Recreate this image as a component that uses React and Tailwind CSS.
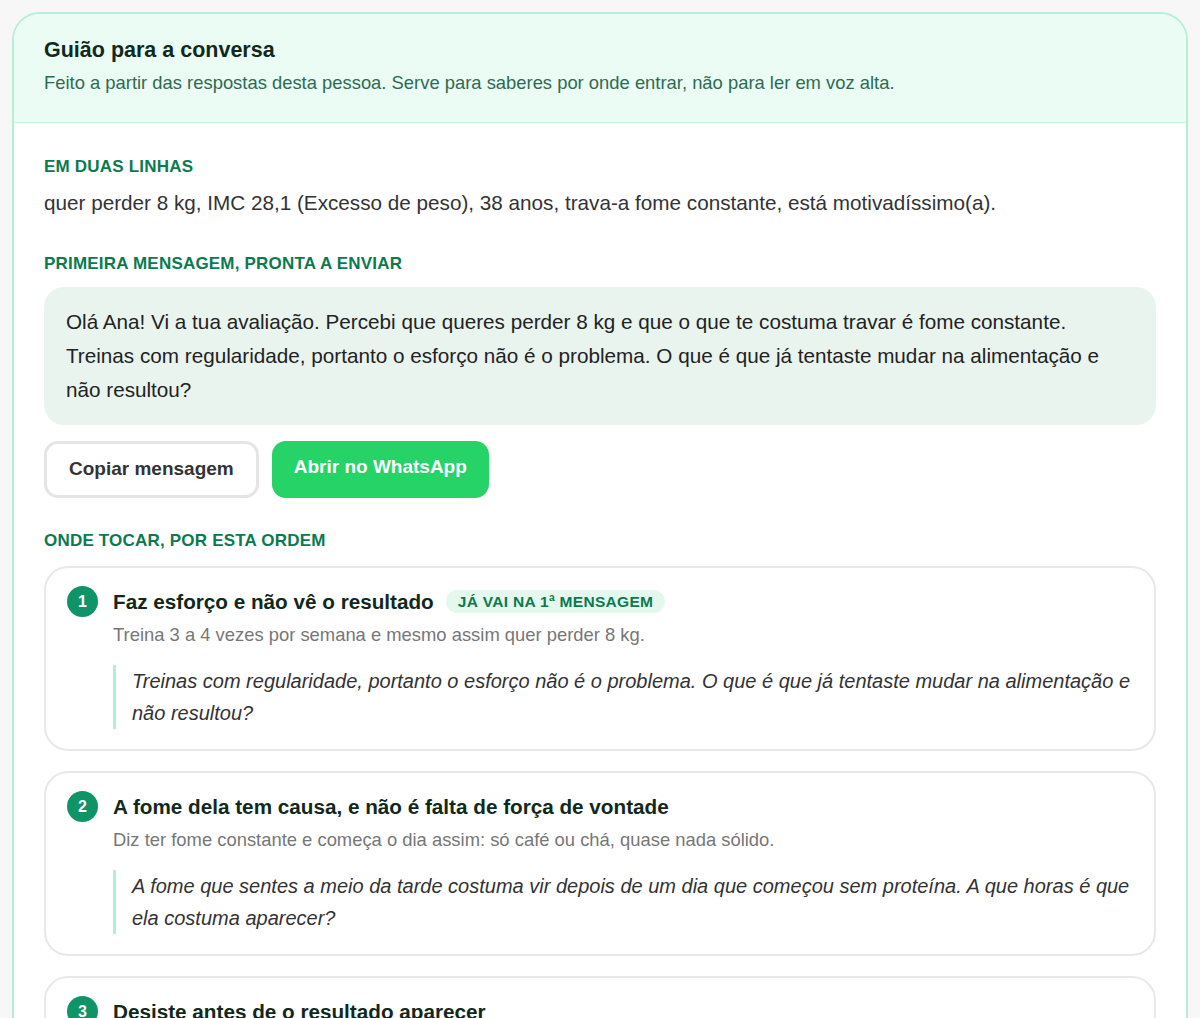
import React from 'react';

const points = [
  {
    n: 1,
    title: 'Faz esforço e não vê o resultado',
    badge: 'Já vai na 1ª mensagem',
    detail: 'Treina 3 a 4 vezes por semana e mesmo assim quer perder 8 kg.',
    quote:
      'Treinas com regularidade, portanto o esforço não é o problema. O que é que já tentaste mudar na alimentação e não resultou?',
  },
  {
    n: 2,
    title: 'A fome dela tem causa, e não é falta de força de vontade',
    detail: 'Diz ter fome constante e começa o dia assim: só café ou chá, quase nada sólido.',
    quote:
      'A fome que sentes a meio da tarde costuma vir depois de um dia que começou sem proteína. A que horas é que ela costuma aparecer?',
  },
  {
    n: 3,
    title: 'Desiste antes de o resultado aparecer',
    detail: 'Já tentou várias vezes e parou ao fim de poucas semanas.',
    quote:
      'Quando paraste das outras vezes, foi por falta de tempo ou porque não vias diferença na balança?',
  },
];

const SectionLabel = ({ children, className = '' }) => (
  <div className={`text-[17px] leading-6 font-bold uppercase tracking-[0.2px] text-[#0b7a4e] ${className}`}>
    {children}
  </div>
);

const PointCard = ({ p }) => (
  <div className="rounded-[24px] border-2 border-[#e8e8e8] bg-white px-[21px] pt-[18px] pb-[20px] flex items-start gap-[15px]">
    <div className="w-[31px] h-[31px] shrink-0 rounded-full bg-[#0e9467] text-white text-[16px] font-bold flex items-center justify-center">
      {p.n}
    </div>
    <div className="flex-1 min-w-0">
      <div className="flex items-center gap-3 h-[31px]">
        <span className="text-[20.7px] font-bold text-[#10291c]">{p.title}</span>
        {p.badge && (
          <span className="rounded-full bg-[#e4f8ee] px-3 h-[23px] flex items-center text-[15.5px] font-bold uppercase tracking-[0.3px] text-[#0b7a4e]">
            {p.badge}
          </span>
        )}
      </div>
      <div className="mt-[5px] text-[18.4px] leading-[26px] text-[#777]">{p.detail}</div>
      <div className="mt-[17px] border-l-[3px] border-[#b2efd3] pl-[16px] text-[20px] leading-[32px] italic text-[#333]">
        {p.quote}
      </div>
    </div>
  </div>
);

export default function App() {
  return (
    <div className="min-h-screen bg-[#f7f7f7] p-3 font-['Liberation_Sans',Arial,sans-serif]">
      <div className="rounded-[28px] border-2 border-[#b8eed8] bg-white overflow-hidden">
        <div className="bg-[#eafcf4] border-b border-[#cdf3e2] px-[30px] pt-[22px] pb-[26px]">
          <h1 className="text-[21.5px] leading-7 font-bold text-[#10291c]">Guião para a conversa</h1>
          <p className="mt-[6px] text-[18.4px] leading-[26px] text-[#2f6b52]">
            Feito a partir das respostas desta pessoa. Serve para saberes por onde entrar, não para ler em voz alta.
          </p>
        </div>

        <div className="px-[30px] pt-[32px] pb-8">
          <SectionLabel>Em duas linhas</SectionLabel>
          <p className="mt-[10px] text-[20.7px] leading-7 text-[#333]">
            quer perder 8 kg, IMC 28,1 (Excesso de peso), 38 anos, trava-a fome constante, está motivadíssimo(a).
          </p>

          <SectionLabel className="mt-[35px]">Primeira mensagem, pronta a enviar</SectionLabel>
          <div className="mt-[11px] rounded-[20px] bg-[#eaf4ee] px-[22px] py-[18px] text-[20.7px] leading-[34px] text-[#222]">
            Olá Ana! Vi a tua avaliação. Percebi que queres perder 8 kg e que o que te costuma travar é fome constante.
            Treinas com regularidade, portanto o esforço não é o problema. O que é que já tentaste mudar na alimentação e
            não resultou?
          </div>

          <div className="mt-4 flex gap-[13px]">
            <button className="h-[57px] px-[22px] rounded-[14px] border-[3px] border-[#e5e5e5] bg-white text-[19px] font-bold text-[#333]">
              Copiar mensagem
            </button>
            <button className="h-[57px] px-[22px] rounded-[14px] bg-[#25d366] text-[19px] font-bold text-white pb-[5px]">
              Abrir no WhatsApp
            </button>
          </div>

          <SectionLabel className="mt-[31px]">Onde tocar, por esta ordem</SectionLabel>
          <div className="mt-[13px] flex flex-col gap-5">
            {points.map((p) => (
              <PointCard key={p.n} p={p} />
            ))}
          </div>
        </div>
      </div>
    </div>
  );
}
